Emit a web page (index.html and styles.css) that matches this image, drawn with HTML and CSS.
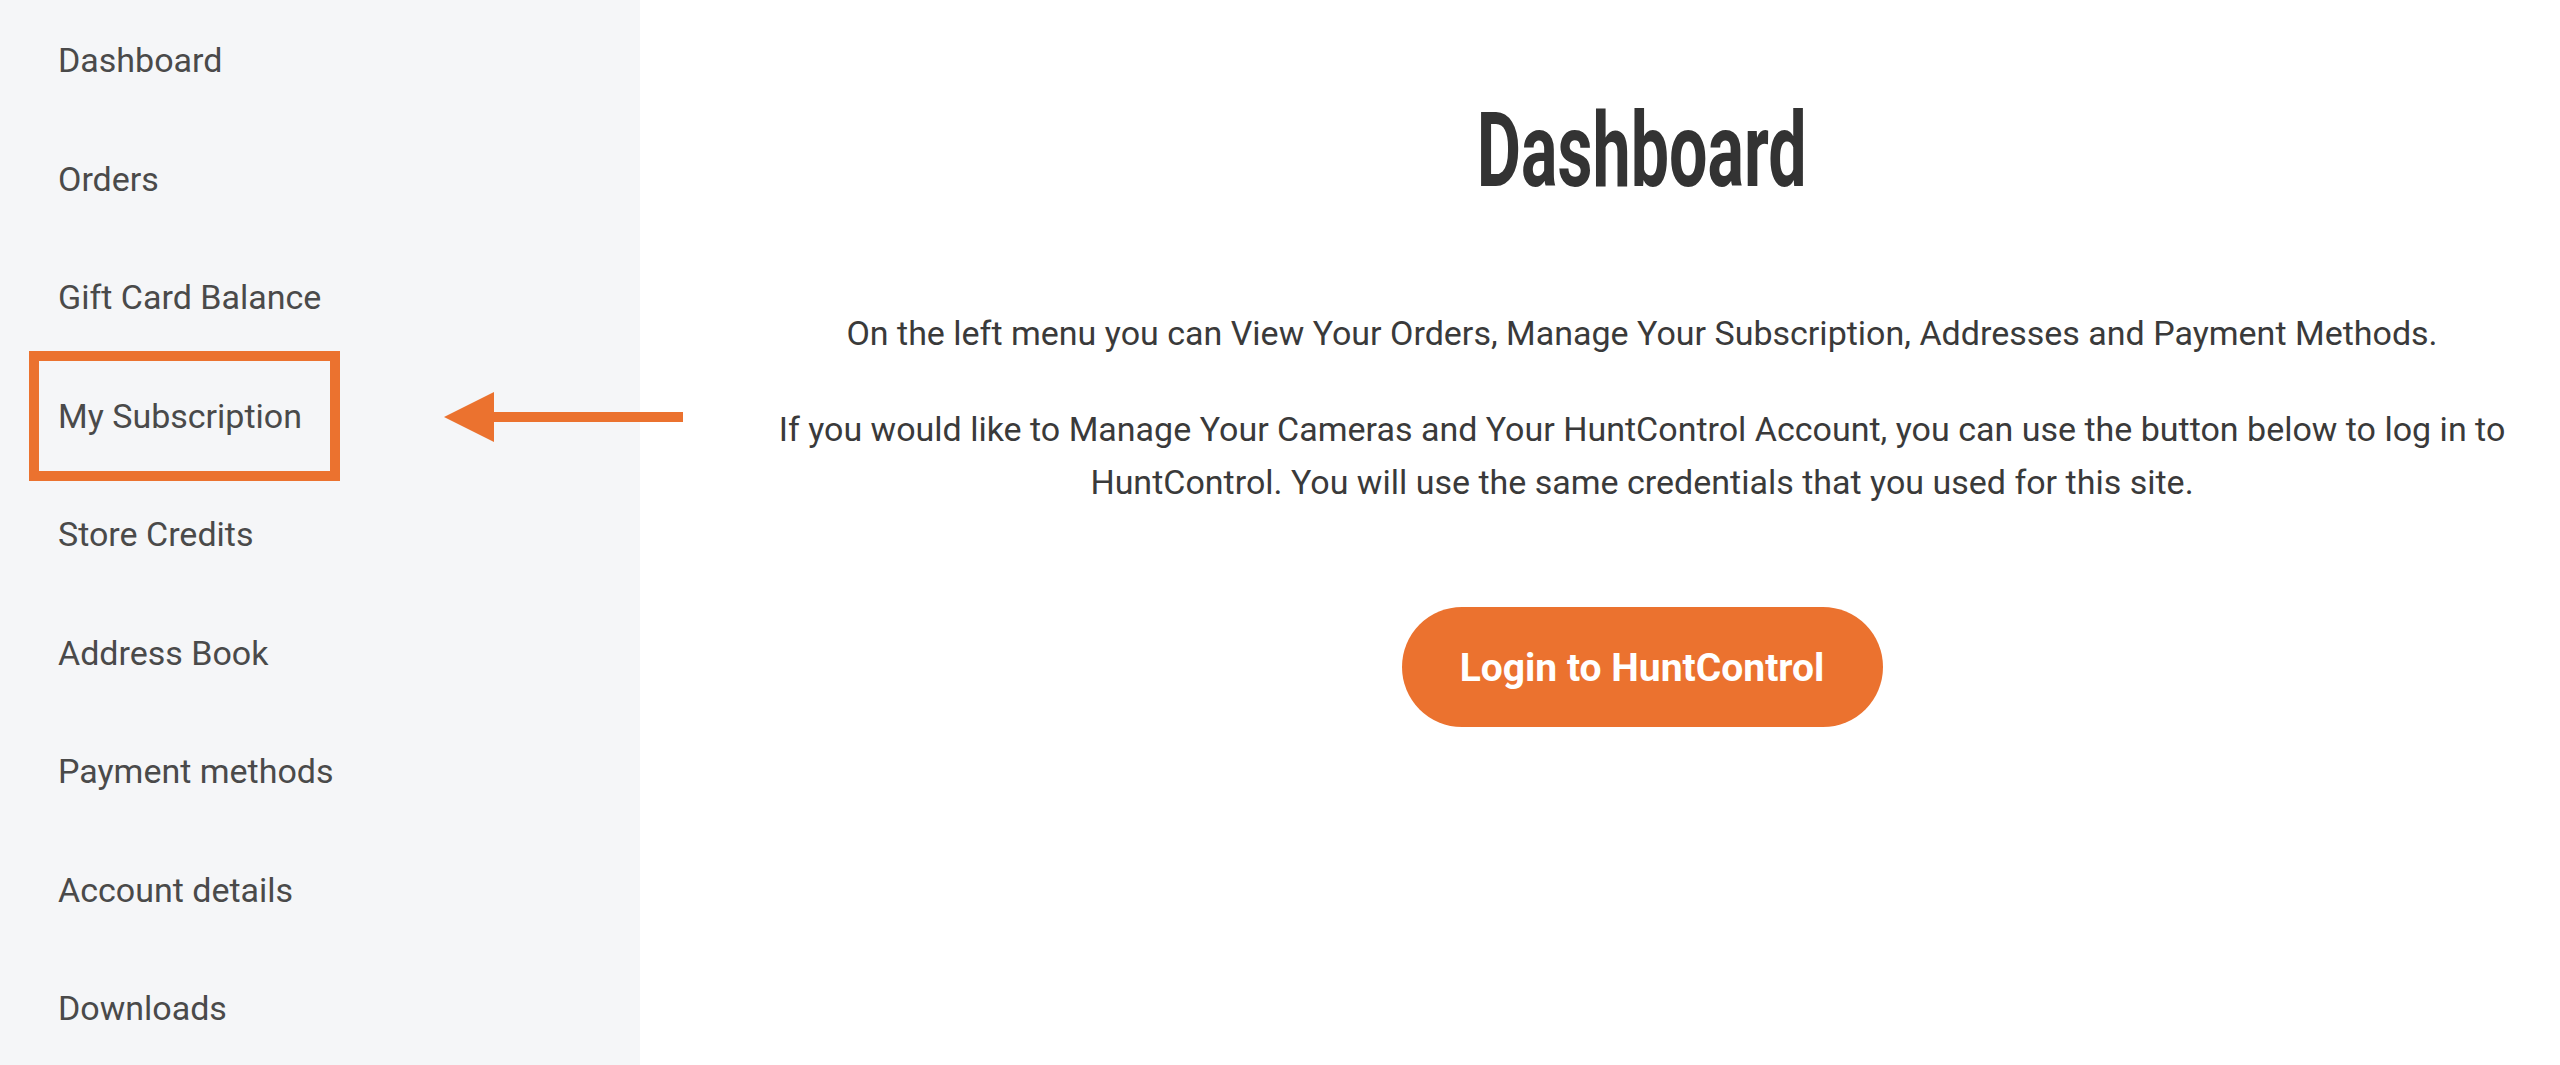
FILE: index.html
```html
<!DOCTYPE html>
<html lang="en">
<head>
<meta charset="utf-8">
<title>Dashboard</title>
<link rel="stylesheet" href="styles.css">
</head>
<body>
<div class="page">
  <aside class="sidebar">
    <nav class="nav">
      <a class="nav-item" href="#">Dashboard</a>
      <a class="nav-item" href="#">Orders</a>
      <a class="nav-item" href="#">Gift Card Balance</a>
      <a class="nav-item nav-item--highlight" href="#">My Subscription</a>
      <a class="nav-item" href="#">Store Credits</a>
      <a class="nav-item" href="#">Address Book</a>
      <a class="nav-item" href="#">Payment methods</a>
      <a class="nav-item" href="#">Account details</a>
      <a class="nav-item" href="#">Downloads</a>
    </nav>
  </aside>
  <svg class="pointer" width="240" height="50" viewBox="0 0 240 50" aria-hidden="true">
    <polygon points="0,25 50,0 50,50" fill="#EB722F"/>
    <rect x="49" y="20" width="190" height="10" fill="#EB722F"/>
  </svg>
  <main class="main">
    <h1 class="title"><span class="title-text">Dashboard</span></h1>
    <p class="lead">On the left menu you can View Your Orders, Manage Your Subscription, Addresses and Payment Methods.</p>
    <p class="info">If you would like to Manage Your Cameras and Your HuntControl Account, you can use the button below to log in to HuntControl. You will use the same credentials that you used for this site.</p>
    <div class="actions">
      <a class="btn" href="#">Login to HuntControl</a>
    </div>
  </main>
</div>
</body>
</html>
```

FILE: styles.css
```css
html, body {
  margin: 0;
  padding: 0;
  background: #ffffff;
}

body {
  font-family: Roboto, "Liberation Sans", Arial, sans-serif;
  color: #3b3b3b;
}

.page {
  position: relative;
  display: flex;
  width: 2560px;
  height: 1065px;
  overflow: hidden;
}

.sidebar {
  flex: 0 0 640px;
  background: #f5f6f8;
  box-sizing: border-box;
  padding-left: 58px;
}

.nav {
  display: flex;
  flex-direction: column;
  padding-top: 1px;
}

.nav-item {
  display: block;
  position: relative;
  height: 118.5px;
  line-height: 118.5px;
  font-size: 34px;
  letter-spacing: 0px;
  color: #4a4a4a;
  text-decoration: none;
  white-space: nowrap;
}

.nav-item--highlight::after {
  content: "";
  position: absolute;
  left: -29px;
  top: -6px;
  width: 311px;
  height: 130px;
  box-sizing: border-box;
  border: 10px solid #EB722F;
}

.pointer {
  position: absolute;
  left: 444px;
  top: 392px;
}

.main {
  flex: 1 1 auto;
  box-sizing: border-box;
  padding: 99px 40px 0 124px;
  text-align: center;
}

.title {
  margin: 0;
  font-size: 104px;
  line-height: 104px;
  font-weight: 700;
  color: #333333;
}

.title-text {
  display: inline-block;
  transform: scaleX(0.655);
  transform-origin: center;
}

.lead, .info {
  font-size: 34px;
  line-height: 53.5px;
  color: #3a3a3a;
  margin: 0;
}

.lead {
  margin-top: 104px;
}

.info {
  margin-top: 42px;
}

.actions {
  display: flex;
  justify-content: center;
  margin-top: 97px;
}

.btn {
  display: flex;
  align-items: center;
  justify-content: center;
  width: 481px;
  height: 120px;
  border-radius: 60px;
  background: #EB722F;
  color: #ffffff;
  font-size: 39px;
  font-weight: 700;
  text-decoration: none;
  padding-top: 2px;
  box-sizing: border-box;
}
```
